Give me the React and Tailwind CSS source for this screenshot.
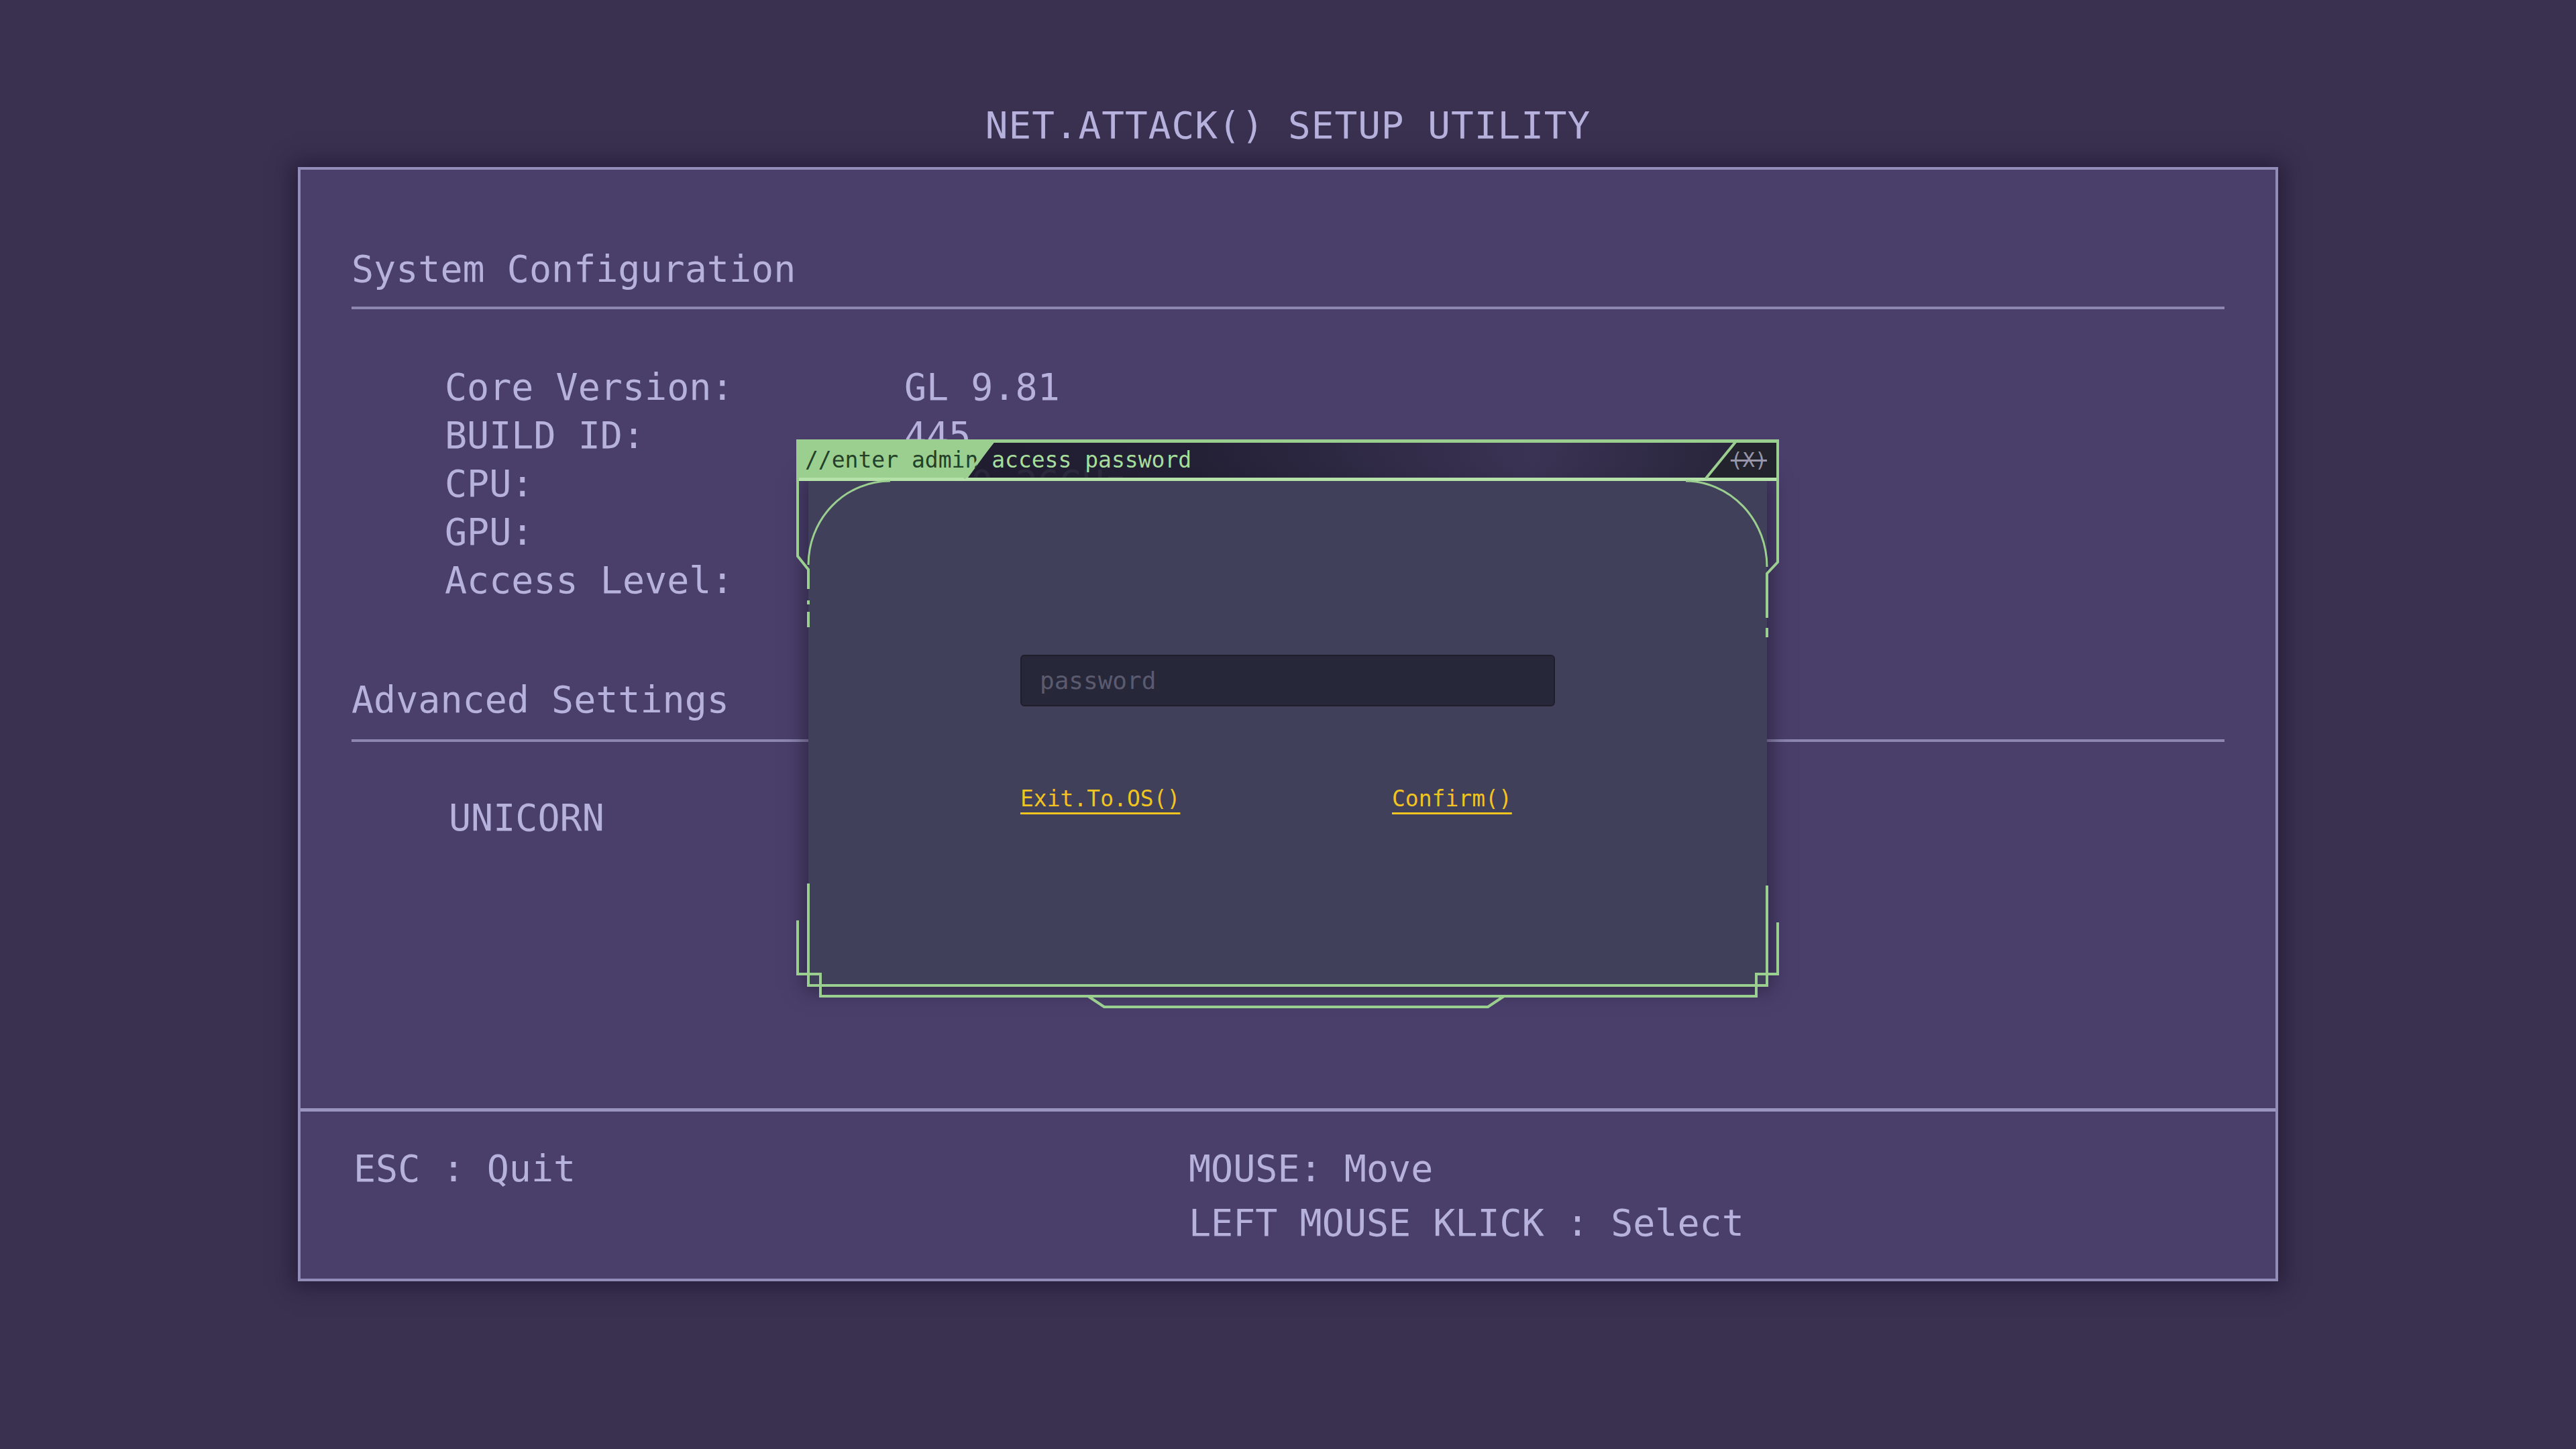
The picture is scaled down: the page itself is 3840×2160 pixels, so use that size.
import React from 'react';

const ROWS = [
  ['Core Version:', 'GL 9.81'],
  ['BUILD ID:', '445'],
  ['CPU:', '1070.26GHz'],
  ['GPU:', 'GTX 1070'],
  ['Access Level:', 'GUEST'],
];

// green frame drawn around the password prompt
function DialogFrame() {
  return (
    <svg className="absolute inset-0 pointer-events-none" width="1465" height="850" viewBox="0 0 1465 850" fill="none">
      <g stroke="#9bcf8f" strokeWidth="4">
        <path d="M2 2.5 H1463" strokeWidth="5" />
        <path d="M2 59.5 H1463" stroke="#b4e2a8" strokeWidth="5" />
        <path d="M2 0 V174 L18 194 V223" />
        <path d="M18 240 V246 M18 257 V280" />
        <path d="M1463 0 V183 L1447 200 V266" />
        <path d="M1447 281 V295" />
        <path d="M140 62 A122 125 0 0 0 18 187" strokeWidth="3" />
        <path d="M1326 62 A122 128 0 0 1 1447 190" strokeWidth="3" />
        <path d="M18 662 V814 H1447 V665" />
        <path d="M2 717 V797 H36 V830 H1431 V797 H1463 V720" />
        <path d="M435 830 L459 846 H1031 L1055 830" />
        <path d="M1356 58 L1400 4" />
        <path d="M250 58 L293 4" />
      </g>
    </svg>
  );
}

function PasswordDialog() {
  return (
    <div className="absolute left-[1187px] top-[655px] w-[1465px] h-[850px] flex flex-col">
      <div className="relative mx-[4px] mt-[5px] h-[52px] overflow-hidden bg-[linear-gradient(90deg,rgba(26,24,40,0.9)_0%,rgba(30,28,46,0.88)_40%,rgba(56,49,80,0.85)_75%,rgba(34,32,50,0.92)_100%)]">
        <div className="absolute left-0 top-0 h-full w-[290px] bg-[#9bcf8f] [clip-path:polygon(0_0,100%_0,252px_100%,0_100%)]" />
        <div className="absolute right-0 top-0 h-full w-[105px] bg-[#23232e] [clip-path:polygon(43px_0,100%_0,100%_100%,0_100%)]" />
        <p className="relative pl-[9px] text-[33px] leading-[52px] whitespace-pre">
          <span className="text-[#23402a]">//enter admin</span>
          <span className="text-[#a6de9b]"> access password</span>
        </p>
        <span className="absolute right-[14px] top-0 text-[30px] leading-[52px] text-[#9896a8] line-through">(X)</span>
      </div>

      <div className="mx-[18px] mt-[5px] h-[753px] bg-[#40405a] shadow-[0_0_28px_6px_rgba(24,20,40,0.55)] pl-[316px] pt-[259px]">
        <input
          readOnly
          placeholder="password"
          className="block w-[797px] h-[77px] rounded-[6px] border-2 border-[#1f1f2b] bg-[#27273a] pl-[27px] text-[36px] text-[#c8c8d8] placeholder:text-[#5b5b70] outline-none font-['DejaVu_Sans_Mono',monospace]"
        />
        <div className="mt-[118px] flex text-[33px] leading-[40px] text-[#f2c41f]">
          <div className="w-[554px]">
            <span className="underline decoration-[3px] underline-offset-[9px]">Exit.To.OS()</span>
          </div>
          <span className="underline decoration-[3px] underline-offset-[9px]">Confirm()</span>
        </div>
      </div>

      <DialogFrame />
    </div>
  );
}

export default function App() {
  return (
    <div className="relative w-[3840px] h-[2160px] overflow-hidden bg-[#3a3150] text-[#b7b1dd] font-['DejaVu_Sans_Mono',monospace] flex flex-col items-center">
      <h1 className="mt-[160px] text-[56px] leading-[54px] tracking-[1px]">NET.ATTACK() SETUP UTILITY</h1>

      <div className="mt-[35px] w-[2952px] h-[1661px] border-4 border-[#928db8] bg-[#4a3f6b] shadow-[0_0_30px_8px_rgba(28,22,48,0.7)] flex flex-col">
        <section className="flex-1 px-[76px] pt-[121px] text-[55px]">
          <h2 className="leading-[54px]">System Configuration</h2>
          <div className="mt-[29px] h-[4px] bg-[#8c86b0]" />

          <div className="mt-[80px] pl-[139px] grid grid-cols-[685px_1fr] leading-[72px]">
            {ROWS.map(([label, value]) => (
              <React.Fragment key={label}>
                <span>{label}</span>
                <span>{value}</span>
              </React.Fragment>
            ))}
          </div>

          <h2 className="mt-[115px] leading-[54px]">Advanced Settings</h2>
          <div className="mt-[32px] h-[4px] bg-[#8c86b0]" />

          <p className="mt-[86px] pl-[145px] leading-[54px]">UNICORN</p>
        </section>

        <footer className="h-[254px] border-t-[5px] border-[#9a95c0] px-[76px] pt-[45px] grid grid-cols-[1248px_1fr] text-[55px] leading-[81px]">
          <div className="pl-[3px] whitespace-pre">ESC : Quit</div>
          <div className="whitespace-pre">
            <p>MOUSE: Move</p>
            <p>LEFT MOUSE KLICK : Select</p>
          </div>
        </footer>
      </div>

      <PasswordDialog />
    </div>
  );
}
